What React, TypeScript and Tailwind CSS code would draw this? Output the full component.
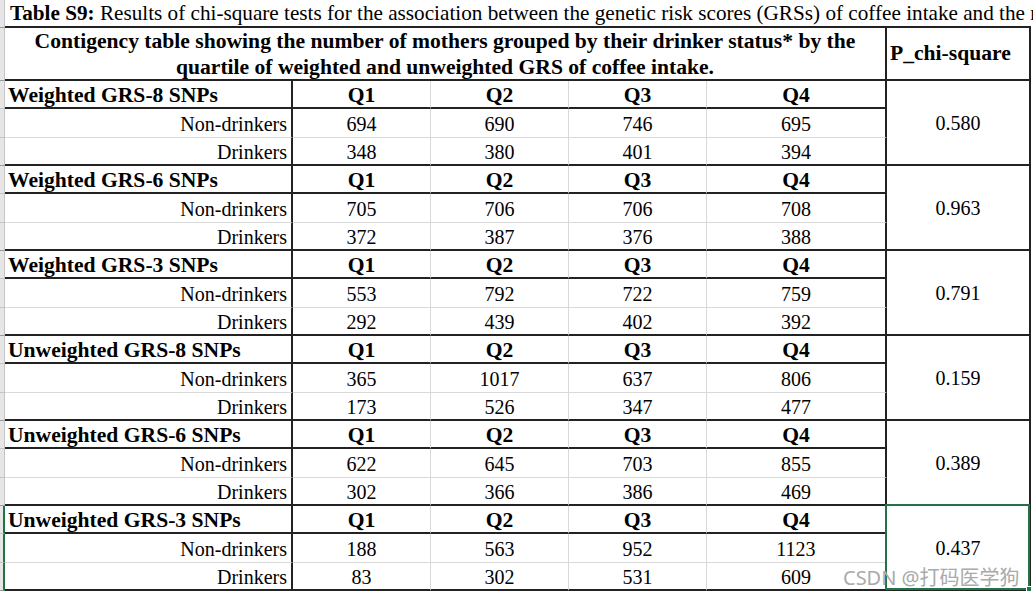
import React from 'react';

const blocks = [
  { name: 'Weighted GRS-8 SNPs', non: [694, 690, 746, 695], dr: [348, 380, 401, 394], p: '0.580' },
  { name: 'Weighted GRS-6 SNPs', non: [705, 706, 706, 708], dr: [372, 387, 376, 388], p: '0.963' },
  { name: 'Weighted GRS-3 SNPs', non: [553, 792, 722, 759], dr: [292, 439, 402, 392], p: '0.791' },
  { name: 'Unweighted GRS-8 SNPs', non: [365, 1017, 637, 806], dr: [173, 526, 347, 477], p: '0.159' },
  { name: 'Unweighted GRS-6 SNPs', non: [622, 645, 703, 855], dr: [302, 366, 386, 469], p: '0.389' },
  { name: 'Unweighted GRS-3 SNPs', non: [188, 563, 952, 1123], dr: [83, 302, 531, 609], p: '0.437' },
];

// gray grid line on inner quartile columns, black one before the P column
const qBorder = (i: number) => (i === 3 ? 'border-r-2 border-r-[#222]' : 'border-r border-r-[#d9d9d9]');

const Stripe = ({ last, selected }: { last?: boolean; selected?: boolean }) => (
  <div
    className={`bg-[#e6e6e6] border-b ${last ? 'border-b-[#9a9a9a]' : 'border-b-[#c4c4c4]'} ${
      selected ? 'border-r-2 border-r-[#217346]' : 'border-r border-r-[#c4c4c4]'
    }`}
  />
);

export default function App() {
  return (
    <div className="relative w-[1033px] h-[596px] overflow-hidden bg-white text-black font-['Liberation_Serif',serif]">
      <div className="grid grid-cols-[5px_288px_138px_138px_138px_180px_144px] grid-rows-[28px_53px_repeat(6,28px_29px_28px)]">
        {/* title row */}
        <Stripe last />
        <div className="col-span-6 border-b-2 border-b-[#222] whitespace-nowrap overflow-visible pl-[5px] text-[21.2px] leading-[26px]">
          <b>Table S9:</b> Results of chi-square tests for the association between the genetic risk scores (GRSs) of coffee intake and the risk of
        </div>

        {/* header row */}
        <Stripe last />
        <div className="col-span-5 flex flex-col items-center justify-center pt-[1px] border-b-2 border-b-[#222] border-r-2 border-r-[#222] font-bold text-[21.6px] leading-[26px] whitespace-nowrap">
          <span>Contigency table showing the number of mothers grouped by their drinker status* by the</span>
          <span>quartile of weighted and unweighted GRS of coffee intake.</span>
        </div>
        <div className="flex items-center border-b-2 border-b-[#222] border-r-2 border-r-[#222] pl-[3px] font-bold text-[21.6px]">
          P_chi-square
        </div>

        {blocks.map((b, bi) => {
          const sel = bi === blocks.length - 1;
          return (
            <React.Fragment key={b.name}>
              <Stripe selected={sel} />
              <div className="flex items-center pt-[3px] border-b-2 border-b-[#222] border-r-2 border-r-[#222] pl-[3px] font-bold text-[21.6px] whitespace-nowrap">
                {b.name}
              </div>
              {['Q1', 'Q2', 'Q3', 'Q4'].map((q, i) => (
                <div key={q} className={`flex items-center justify-center pt-[3px] border-b-2 border-b-[#222] ${qBorder(i)} font-bold text-[21.6px]`}>
                  {q}
                </div>
              ))}
              <div className="relative row-span-3 flex items-center justify-center border-b-2 border-b-[#222] border-r-2 border-r-[#222] text-[20px]">
                {b.p}
                {sel && (
                  <>
                    <div className="absolute -left-[2px] -top-[2px] right-[-1px] -bottom-[1px] border-2 border-[#217346]" />
                    <div className="absolute -right-[3px] -bottom-[3px] w-[6px] h-[6px] bg-[#217346] border border-white" />
                  </>
                )}
              </div>

              <Stripe selected={sel} />
              <div className="flex items-center justify-end pt-[1px] border-b border-b-[#d9d9d9] border-r-2 border-r-[#222] pr-[4px] text-[20px]">
                Non-drinkers
              </div>
              {b.non.map((v, i) => (
                <div key={i} className={`flex items-center justify-center pt-[1px] border-b border-b-[#d9d9d9] ${qBorder(i)} text-[20px]`}>
                  {v}
                </div>
              ))}

              <Stripe selected={sel} last />
              <div className="flex items-center justify-end pt-[1px] border-b-2 border-b-[#222] border-r-2 border-r-[#222] pr-[4px] text-[20px]">
                Drinkers
              </div>
              {b.dr.map((v, i) => (
                <div key={i} className={`flex items-center justify-center pt-[1px] border-b-2 border-b-[#222] ${qBorder(i)} text-[20px]`}>
                  {v}
                </div>
              ))}
            </React.Fragment>
          );
        })}
      </div>

      {/* watermark */}
      <div className="absolute left-[843px] top-[563px] text-[20px] text-[#aaaaaa] font-['Noto_Sans','Noto_Sans_CJK_SC',sans-serif] whitespace-nowrap">
        CSDN @打码医学狗
      </div>
    </div>
  );
}
